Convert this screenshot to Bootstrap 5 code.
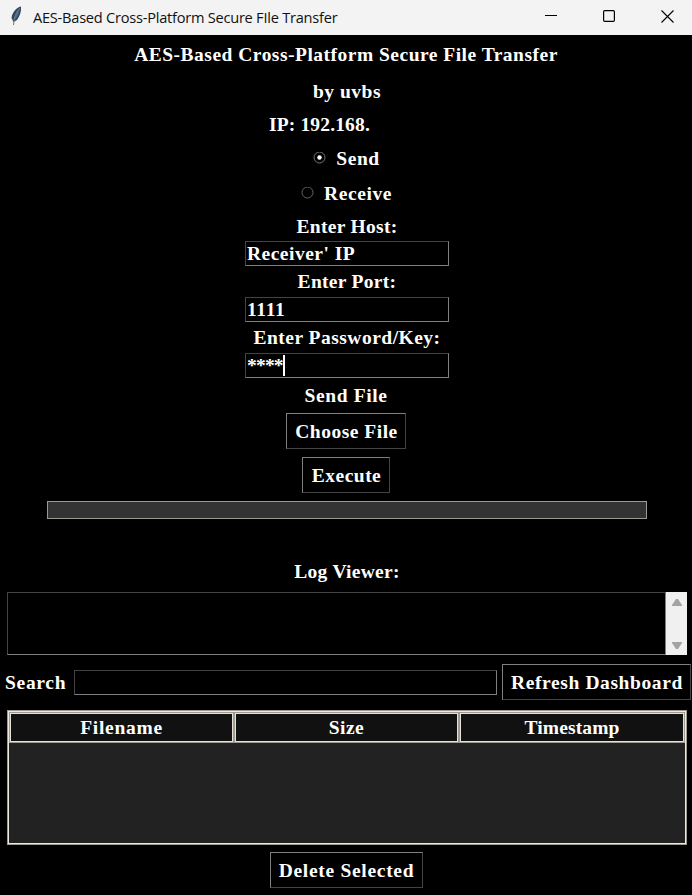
<!DOCTYPE html>
<html lang="en">
<head>
<meta charset="utf-8">
<title>AES-Based Cross-Platform Secure FIle Transfer</title>
<link href="https://cdn.jsdelivr.net/npm/bootstrap@5.3.0/dist/css/bootstrap.min.css" rel="stylesheet">
<style>
body{width:692px;height:895px;overflow:hidden;background:#000;color:#fff;font:bold 19.5px/24px "Century Schoolbook","Liberation Serif",serif;letter-spacing:.5px}
.titlebar{height:35px;background:#f3f3f3;color:#111;font:14.6px/20px "Open Sans",sans-serif;letter-spacing:0}
.title-text{margin-left:10px;letter-spacing:-.24px;white-space:nowrap;margin-top:-2px}
.feather{margin-left:9px;margin-top:-3px}
.win-icons{margin-right:18px;margin-top:-3px;gap:46px}
.line{display:flex;align-items:center;justify-content:center;white-space:nowrap;flex:none}
.cap{padding-left:2px}
.down{padding-top:1px}
.h30{height:30px}.h31{height:31px}.h32{height:32px}.h34{height:34px}.h35{height:35px}.h36{height:36px}.h38{height:38px}.h40{height:40px}
.ip{width:154px;justify-content:flex-start}
.ip span{font-size:19.5px;letter-spacing:.15px}
.option{gap:10px;padding-left:1px}
.field{width:204px;height:25px;border:1px solid #444;border-right-color:#808080;border-bottom-color:#808080;padding-left:1px;display:flex;align-items:center;white-space:nowrap;flex:none}
main .field,main .bar{margin-left:2px}
.stars{letter-spacing:-.8px}
.search-label{width:69px;padding-top:2px}
.search-box{width:423px}
.tkbtn{height:36px;border:1px solid #808080;border-right-color:#444;border-bottom-color:#444;background:#000;color:#fff;font:inherit;letter-spacing:.5px;border-radius:0;padding:2px 0 0 1px;display:flex;align-items:center;justify-content:center;white-space:nowrap;flex:none}
.b-choose{width:120px}.b-exec{width:88px}.b-refresh{width:189px;margin-left:5px}.b-delete{width:153px;margin-top:7px}
.caret{width:2px;height:21px;background:#fff}
.bar{width:600px;height:18px;background:#333;border:1px solid #9e9a91;border-radius:0;flex:none}
.log-title{margin-top:33px}
.log{margin:0 5px 0 7px;height:63px;flex:none}
.logtext{border:1px solid #444;border-bottom-color:#808080;border-right-color:#808080}
.scroller{width:21px;background:#f0f0f0;padding:7px 0 6px}
.searchrow{margin-top:9px;padding-left:5px}
.tree{margin:10px 5px 0 7px;height:135px;flex:none;background:#222;border:1px solid #9e9a91;box-shadow:inset 0 0 0 1px #eee9e2;padding:1px}
.heads{height:31px}
.hcell{background:#111;border:1px solid #9e9a91;box-shadow:inset 0 0 0 1px #e6e2da;width:225px}
.ls-0{letter-spacing:.15px}.ls-1{letter-spacing:.3px}.ls-2{letter-spacing:.49px}.ls-3{letter-spacing:.6px}.ls-4{letter-spacing:.7px}
</style>
<script src="https://cdn.jsdelivr.net/npm/bootstrap@5.3.0/dist/js/bootstrap.bundle.min.js"></script>
</head>
<body class="d-flex flex-column align-items-stretch">
<header class="titlebar d-flex align-items-center flex-shrink-0">
  <svg class="feather" width="14" height="20" viewBox="0 0 14 20"><path d="M12 .5C7 1.500 3 7 2.500 12L4.500 16 8 14C11 10 12.500 5 12 .5Z" fill="#34465a"/><path d="M10.500 2C7 5 5 10 4.500 14L7 12.500C9.500 9 10.500 5 10.500 2Z" fill="#3e6b9f"/><path d="M11 2Q5 9 4.500 19" stroke="#777" fill="none"/></svg>
  <span class="title-text">AES-Based Cross-Platform Secure FIle Transfer</span>
  <div class="win-icons ms-auto d-flex align-items-center">
    <svg width="12" height="13"><path d="M0 5.500H12" stroke="#000"/></svg>
    <svg width="12" height="12"><rect x=".6" y=".6" width="10.800" height="10.800" rx="1.200" fill="none" stroke="#000" stroke-width="1.200"/></svg>
    <svg width="13" height="13"><path d="M.5.5 12.500 12.500M12.500.5.5 12.500" stroke="#000" stroke-width="1.100"/></svg>
  </div>
</header>
<main class="d-flex flex-column align-items-center">
  <div class="line h38 ls-2 down">AES-Based Cross-Platform Secure File Transfer</div>
  <div class="line cap h36 down">by uvbs</div>
  <div class="line ip h32"><span>IP: 192.168.</span></div>
  <div class="line option h34 down ls-3"><svg width="13" height="13"><circle cx="6.500" cy="5.500" r="5.500" fill="none" stroke="#777"/><circle cx="6.500" cy="5.500" r="2.200" fill="#fff"/></svg><span>Send</span></div>
  <div class="line option h36 down ls-3"><svg width="13" height="13"><circle cx="6.500" cy="5.500" r="5.500" fill="none" stroke="#666"/></svg><span>Receive</span></div>
  <div class="line cap h30 down ls-1">Enter Host:</div>
  <div class="field ls-2">Receiver' IP</div>
  <div class="line cap h31 ls-1">Enter Port:</div>
  <div class="field ls-4">1111</div>
  <div class="line cap h31 ls-2">Enter Password/Key:</div>
  <div class="field"><span class="stars">****</span><i class="caret"></i></div>
  <div class="line h35 ls-3">Send File</div>
  <button class="tkbtn b-choose">Choose File</button>
  <button class="tkbtn b-exec mt-2">Execute</button>
  <div class="bar mt-2"></div>
</main>
<div class="line cap h40 ls-1 log-title">Log Viewer:</div>
<div class="log d-flex">
  <div class="logtext flex-grow-1"></div>
  <div class="scroller d-flex flex-column justify-content-between align-items-center">
    <svg width="10" height="8"><path d="M4 0h2l4 6v1H0V6Z" fill="#a3a3a3"/></svg>
    <svg width="10" height="8"><path d="M0 1h10v1L6 8H4L0 2Z" fill="#a3a3a3"/></svg>
  </div>
</div>
<div class="searchrow d-flex align-items-center">
  <span class="search-label ls-4">Search</span><div class="field search-box"></div>
  <button class="tkbtn b-refresh ls-3">Refresh Dashboard</button>
</div>
<div class="tree">
  <div class="heads d-flex"><div class="hcell line ls-4">Filename</div><div class="hcell line">Size</div><div class="hcell line flex-grow-1 ls-0">Timestamp</div></div>
</div>
<button class="tkbtn b-delete ls-4 align-self-center">Delete Selected</button>
</body>
</html>
